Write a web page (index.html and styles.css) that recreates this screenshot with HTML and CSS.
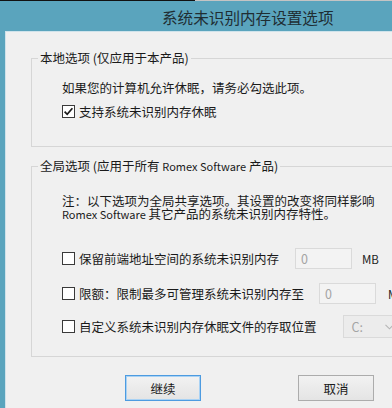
FILE: index.html
```html
<!DOCTYPE html>
<html lang="zh-CN">
<head>
<meta charset="utf-8">
<title>系统未识别内存设置选项</title>
<link rel="stylesheet" href="styles.css">
</head>
<body>
<div class="screen">
  <div class="topline"><span class="topline-dark"></span></div>
  <div class="window">
    <div class="titlebar"><span class="title">系统未识别内存设置选项</span></div>
    <div class="frame">
      <div class="client">
        <fieldset class="group g1">
          <legend class="group-label">本地选项 (仅应用于本产品)</legend>
          <div class="group-body g1-body">
            <p class="line">如果您的计算机允许休眠，请务必勾选此项。</p>
            <div class="row check-row">
              <span class="box">
                <svg width="13" height="13" viewBox="0 0 13 13"><path d="M2.6 6.6 L5.2 9.3 L10.4 3.2" fill="none" stroke="#1a1a1a" stroke-width="1.7"/></svg>
              </span>
              <span class="label">支持系统未识别内存休眠</span>
            </div>
          </div>
        </fieldset>
        <fieldset class="group g2">
          <legend class="group-label">全局选项 (应用于所有 <span class="latin">Romex Software</span> 产品)</legend>
          <div class="group-body g2-body">
            <p class="note">注：以下选项为全局共享选项。其设置的改变将同样影响<br><span class="latin">Romex Software</span> 其它产品的系统未识别内存特性。</p>
            <div class="row r1">
              <span class="box"></span>
              <span class="label">保留前端地址空间的系统未识别内存</span>
              <span class="field f1">0</span>
              <span class="unit">MB</span>
            </div>
            <div class="row r2">
              <span class="box"></span>
              <span class="label">限额：限制最多可管理系统未识别内存至</span>
              <span class="field f2">0</span>
              <span class="unit">MB</span>
            </div>
            <div class="row r3">
              <span class="box"></span>
              <span class="label">自定义系统未识别内存休眠文件的存取位置</span>
              <span class="combo"><span class="combo-text">C:</span><svg class="arrow" width="9" height="6" viewBox="0 0 9 6"><path d="M0.5 0.8 L4.5 4.8 L8.5 0.8" fill="none" stroke="#b5b5b5" stroke-width="1.1"/></svg></span>
            </div>
          </div>
        </fieldset>
        <div class="buttons">
          <button class="btn default" type="button">继续</button>
          <button class="btn" type="button">取消</button>
        </div>
      </div>
    </div>
  </div>
</div>
</body>
</html>
```

FILE: styles.css
```css
html, body {
  margin: 0;
  padding: 0;
}
body {
  width: 392px;
  height: 408px;
  overflow: hidden;
  background: #f0f0f0;
  font-family: "Noto Sans CJK SC", "Noto Sans", sans-serif;
  color: #1a1a1a;
}
.screen {
  width: 392px;
  height: 408px;
  overflow: hidden;
}
.topline {
  height: 1px;
  background: #c4c4c4;
  display: flex;
}
.topline-dark {
  width: 195px;
  background: #111;
}
.window {
  background: #5aa4bd;
  width: 460px;
}
.titlebar {
  height: 30px;
  display: flex;
  align-items: center;
  padding-left: 162px;
}
.title {
  font-size: 15.6px;
  color: #1f2d33;
  line-height: 20px;
  padding-top: 1px;
}
.frame {
  padding-left: 5px;
}
.client {
  background: #f0f0f0;
  border-left: 1px solid #cfe2ea;
  border-top: 1px solid #cfe3eb;
  height: 380px;
  font-size: 12.5px;
}
.latin {
  font-size: 11px;
}
.group {
  margin: 0 0 0 25px;
  padding: 0;
  width: 390px;
  box-sizing: border-box;
  border: 1px solid #d6d6d6;
  min-width: 0;
}
.g1 {
  margin-top: 19px;
}
.g2 {
  margin-top: 12px;
}
.group-label {
  margin-left: 6px;
  padding: 0 2px;
  line-height: 14px;
  font-size: 12.5px;
}
.group-body {
  padding-left: 30px;
}
.g1-body {
  padding-top: 15px;
  padding-bottom: 24px;
}
.g2-body {
  padding-top: 21px;
  padding-bottom: 19px;
}
.line {
  margin: 0;
  line-height: 16px;
}
.note {
  margin: 0;
  line-height: 13px;
}
.row {
  display: flex;
  align-items: center;
  height: 21px;
  white-space: nowrap;
}
.check-row {
  margin-top: 5px;
}
.r1 {
  margin-top: 27px;
}
.r2 {
  margin-top: 14px;
}
.r3 {
  margin-top: 12px;
}
.box {
  width: 11px;
  height: 11px;
  border: 1px solid #3a3a3a;
  background: #fff;
  position: relative;
  flex: none;
  margin-right: 4px;
}
.box svg {
  position: absolute;
  left: -1px;
  top: -1px;
}
.field {
  width: 50px;
  height: 19px;
  border: 1px solid #dadada;
  background: #f3f3f3;
  color: #a4a4a4;
  line-height: 19px;
  padding-left: 5px;
  box-sizing: content-box;
  flex: none;
}
.f1 {
  margin-left: 16px;
}
.f2 {
  margin-left: 15px;
}
.unit {
  margin-left: 10px;
  font-size: 11.5px;
}
.r2 .unit {
  margin-left: 12px;
}
.combo {
  margin-left: 26px;
  width: 90px;
  height: 21px;
  border: 1px solid #dadada;
  background: #ececec;
  color: #a4a4a4;
  display: flex;
  align-items: center;
  padding-left: 8px;
  flex: none;
}
.combo-text {
  width: 33px;
}
.buttons {
  display: flex;
  gap: 97px;
  padding-left: 119px;
  margin-top: 18px;
}
.btn {
  width: 76px;
  height: 26px;
  font-family: "Noto Sans CJK SC", sans-serif;
  font-size: 12.5px;
  color: #1a1a1a;
  border: 1px solid #acacac;
  background: linear-gradient(#f2f2f2, #e4e4e4);
  padding: 0;
}
.btn.default {
  border-color: #4d9be0;
  box-shadow: inset 0 0 0 1px #a9d2f4;
}
```
